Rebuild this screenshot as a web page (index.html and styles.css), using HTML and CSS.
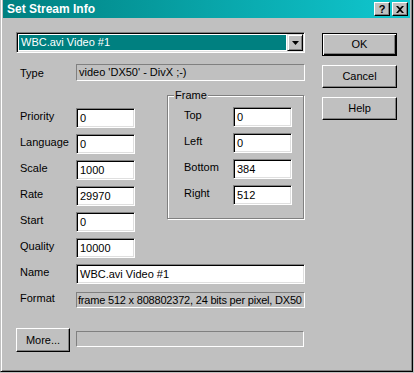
FILE: index.html
```html
<!DOCTYPE html>
<html lang="en">
<head>
  <meta charset="UTF-8" />
  <title>Set Stream Info</title>
  <link rel="stylesheet" href="styles.css">
</head>
<body>
  <div class="window">
    <div class="titlebar">
      <span class="title">Set Stream Info</span>
      <div class="title-buttons">
        <span class="tbtn">?</span>
        <span class="tbtn">
          <svg width="8" height="7" viewBox="0 0 8 7">
            <path d="M0 0h2l2 2 2-2h2L5 3.5 8 7H6L4 5 2 7H0l3-3.5z" fill="#000"/>
          </svg>
        </span>
      </div>
    </div>

    <div class="client">
      <div class="main">
        <div class="combo">
          <div class="combo-value"><span class="combo-text">WBC.avi Video #1</span></div>
          <span class="combo-arrow">
            <svg width="7" height="4" viewBox="0 0 7 4"><path d="M0 0h7L3.5 4z" fill="#000"/></svg>
          </span>
        </div>

        <div class="row row-type">
          <span class="label">Type</span>
          <div class="static wide">video 'DX50' - DivX ;-)</div>
        </div>

        <div class="middle">
          <div class="fields">
            <div class="row"><span class="label">Priority</span><div class="edit small">0</div></div>
            <div class="row"><span class="label">Language</span><div class="edit small">0</div></div>
            <div class="row"><span class="label">Scale</span><div class="edit small">1000</div></div>
            <div class="row"><span class="label">Rate</span><div class="edit small">29970</div></div>
            <div class="row"><span class="label">Start</span><div class="edit small">0</div></div>
            <div class="row"><span class="label">Quality</span><div class="edit small">10000</div></div>
          </div>

          <div class="group">
            <span class="group-title">Frame</span>
            <div class="group-rows">
              <div class="row"><span class="label label-frame">Top</span><div class="edit small">0</div></div>
              <div class="row"><span class="label label-frame">Left</span><div class="edit small">0</div></div>
              <div class="row"><span class="label label-frame">Bottom</span><div class="edit small">384</div></div>
              <div class="row"><span class="label label-frame">Right</span><div class="edit small">512</div></div>
            </div>
          </div>
        </div>

        <div class="row row-name">
          <span class="label">Name</span>
          <div class="edit wide">WBC.avi Video #1</div>
        </div>

        <div class="row row-format">
          <span class="label">Format</span>
          <div class="static wide format-text">frame 512 x 808802372, 24 bits per pixel, DX50</div>
        </div>

        <div class="bottom">
          <span class="btn btn-more">More...</span>
          <div class="progress"></div>
        </div>
      </div>

      <div class="buttons">
        <span class="btn btn-default">OK</span>
        <span class="btn">Cancel</span>
        <span class="btn">Help</span>
      </div>
    </div>
  </div>
</body>
</html>
```

FILE: styles.css
```css
body {
  margin: 0;
  background-color: #c0c0c0;
  font-family: "Liberation Sans", Arial, sans-serif;
  font-size: 11px;
  line-height: 13px;
  color: #000;
}

.window {
  box-sizing: border-box;
  width: 413px;
  height: 372px;
  border: 1px solid #000;
  border-top: 0;
  border-left-color: #c0c0c0;
  box-shadow: inset 1px 0 #fff, inset -1px -1px #808080;
  padding: 0 2px 2px 2px;
  background-color: #c0c0c0;
}

/* title bar */
.titlebar {
  height: 18px;
  display: flex;
  align-items: center;
  justify-content: space-between;
  padding: 0 2px 0 4px;
  background: linear-gradient(to right, #008080, #10c8d0);
}
.title {
  color: #fff;
  font-weight: bold;
  font-size: 12px;
}
.title-buttons {
  display: flex;
  gap: 2px;
}
.tbtn {
  box-sizing: border-box;
  width: 16px;
  height: 14px;
  display: flex;
  align-items: center;
  justify-content: center;
  background-color: #c0c0c0;
  border: 1px solid;
  border-color: #fff #000 #000 #fff;
  box-shadow: inset -1px -1px #808080;
  font-weight: bold;
  font-size: 11px;
}

/* client area */
.client {
  display: flex;
  padding: 14px 0 0 13px;
}
.main {
  width: 289px;
}
.buttons {
  margin-left: 17px;
  padding-top: 1px;
  display: flex;
  flex-direction: column;
  gap: 9px;
}

.btn {
  box-sizing: border-box;
  width: 75px;
  height: 23px;
  display: flex;
  align-items: center;
  justify-content: center;
  border: 1px solid;
  border-color: #fff #000 #000 #fff;
  box-shadow: inset -1px -1px #808080;
}
.btn-default {
  border-color: #000;
  box-shadow: inset 1px 1px #fff, inset -1px -1px #000, inset -2px -2px #808080;
}

/* combo box */
.combo {
  box-sizing: border-box;
  height: 21px;
  display: flex;
  border: 1px solid;
  border-color: #808080 #fff #fff #808080;
  box-shadow: inset 1px 1px #000, inset -1px -1px #dfdfdf;
  padding: 1px;
  background-color: #fff;
  margin-bottom: 11px;
}
.combo-value {
  flex: 1;
  padding: 1px;
}
.combo-text {
  display: block;
  height: 15px;
  background-color: #008080;
  color: #fff;
  padding-left: 2px;
  line-height: 15px;
}
.combo-arrow {
  box-sizing: border-box;
  width: 16px;
  display: flex;
  align-items: center;
  justify-content: center;
  background-color: #c0c0c0;
  border: 1px solid;
  border-color: #dfdfdf #000 #000 #dfdfdf;
  box-shadow: inset 1px 1px #fff, inset -1px -1px #808080;
}

/* rows */
.row {
  display: flex;
  align-items: flex-start;
}
.label {
  box-sizing: border-box;
  width: 60px;
  padding: 2px 0 0 4px;
}
.label-frame {
  width: 49px;
  padding-left: 0;
}

.edit {
  box-sizing: border-box;
  height: 20px;
  border: 1px solid;
  border-color: #808080 #fff #fff #808080;
  box-shadow: inset 1px 1px #000, inset -1px -1px #dfdfdf;
  background-color: #fff;
  padding: 3px 0 0 3px;
  white-space: nowrap;
  overflow: hidden;
}
.edit.small {
  width: 59px;
}
.wide {
  width: 229px;
}

.static {
  box-sizing: border-box;
  height: 17px;
  border: 1px solid;
  border-color: #808080 #fff #fff #808080;
  padding: 1px 0 0 2px;
  white-space: nowrap;
  overflow: hidden;
}
.format-text {
  padding-left: 1px;
  letter-spacing: -0.2px;
}

.row-type .label {
  padding-top: 3px;
}

.middle {
  display: flex;
  align-items: flex-start;
  margin-top: 14px;
}
.fields {
  padding-top: 13px;
  display: flex;
  flex-direction: column;
  gap: 6px;
}

/* group box */
.group {
  box-sizing: border-box;
  width: 137px;
  height: 124px;
  margin-left: 32px;
  border: 1px solid #808080;
  box-shadow: inset 1px 1px #fff, 1px 1px #fff;
  padding-left: 16px;
}
.group-title {
  display: block;
  width: fit-content;
  margin: -7px 0 0 -10px;
  padding: 0 1px;
  background-color: #c0c0c0;
}
.group-rows {
  padding-top: 5px;
  display: flex;
  flex-direction: column;
  gap: 6px;
}

.row-name {
  margin-top: 6px;
}
.row-format {
  margin-top: 8px;
}
.row-format .static {
  height: 16px;
}
.row-format .label {
  padding-top: 0;
}

.bottom {
  display: flex;
  align-items: flex-start;
  margin-top: 20px;
}
.btn-more {
  width: 54px;
  height: 24px;
}
.progress {
  box-sizing: border-box;
  width: 228px;
  height: 16px;
  margin: 3px 0 0 6px;
  border: 1px solid;
  border-color: #808080 #fff #fff #808080;
}
```
